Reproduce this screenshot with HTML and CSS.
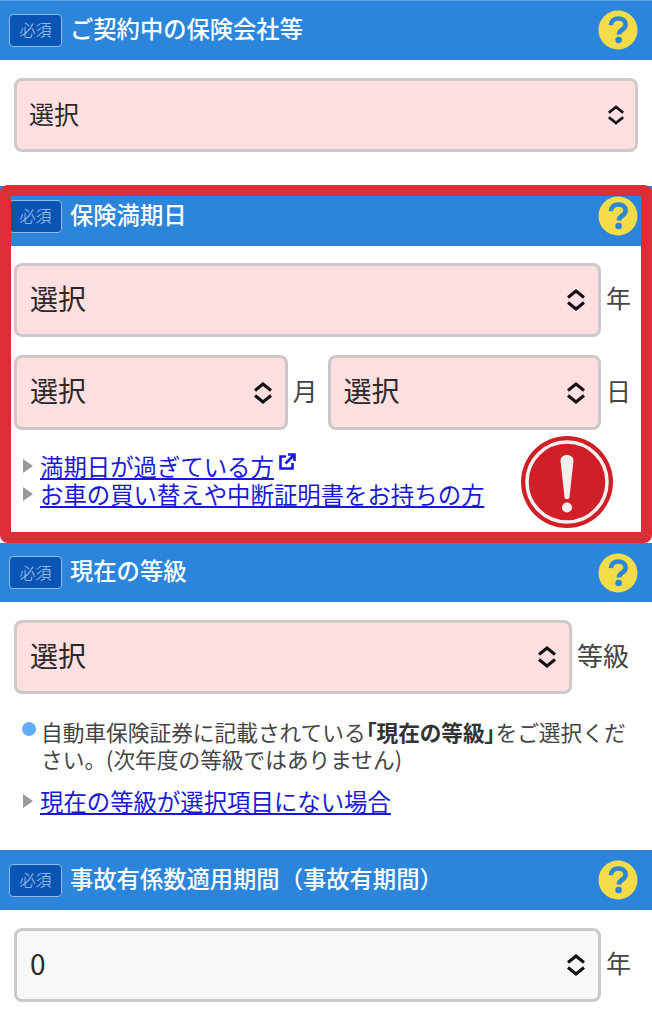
FILE: index.html
```html
<!DOCTYPE html>
<html lang="ja">
<head>
<meta charset="utf-8">
<title>保険満期日</title>
<link rel="stylesheet" href="styles.css">
</head>
<body>
<svg class="defs" width="0" height="0" aria-hidden="true">
  <symbol id="help" viewBox="0 0 40 40">
    <circle cx="20" cy="20" r="19.5" fill="#f3dc47"/>
    <path d="M12.8 15.2c.3-4.4 3.300-6.700 7.500-6.700 4.300 0 7.300 2.400 7.300 5.900 0 2.600-1.500 4-3.500 5.300-2 1.300-3.200 2.200-3.200 4.700" fill="none" stroke="#2b86db" stroke-width="4.600"/>
    <circle cx="20.600" cy="30" r="3.300" fill="#2b86db"/>
  </symbol>
  <symbol id="updown" viewBox="0 0 20 22">
    <path d="M2 8.500 10 2l8 6.500M2 13.500 10 20l8-6.500" fill="none" stroke="#111" stroke-width="3"/>
  </symbol>
</svg>

<section class="block block-first">
  <header class="head"><span class="badge">必須</span><h2 class="title">ご契約中の保険会社等</h2><svg class="help"><use href="#help"/></svg></header>
  <div class="body">
    <div class="row"><div class="select select-small"><span class="value">選択</span><svg class="arrows"><use href="#updown"/></svg></div></div>
  </div>
</section>

<section class="block block-alert">
  <header class="head"><span class="badge">必須</span><h2 class="title">保険満期日</h2><svg class="help"><use href="#help"/></svg></header>
  <div class="body body-alert">
    <div class="row"><div class="select"><span class="value">選択</span><svg class="arrows"><use href="#updown"/></svg></div><span class="unit">年</span></div>
    <div class="row row-split">
      <div class="select"><span class="value">選択</span><svg class="arrows"><use href="#updown"/></svg></div><span class="unit unit-mid">月</span>
      <div class="select"><span class="value">選択</span><svg class="arrows"><use href="#updown"/></svg></div><span class="unit">日</span>
    </div>
    <ul class="links">
      <li><a href="#">満期日が過ぎている方</a><svg class="ext" viewBox="0 0 18 18"><path d="M8 3.500H2.500v12h12V10M7.500 10.500 16 2M10 1.500h6.500V8" fill="none" stroke="#1a1ad6" stroke-width="2.600"/></svg></li>
      <li><a href="#">お車の買い替えや中断証明書をお持ちの方</a></li>
    </ul>
  </div>
  <svg class="alert" viewBox="0 0 92 92" aria-hidden="true">
    <circle cx="46" cy="46" r="46" fill="#d01f26"/>
    <circle cx="46" cy="46" r="40" fill="none" stroke="#f5f0f0" stroke-width="3.500"/>
    <path d="M39.500 25c-.3-8 13.300-8 13 0l-4 36c-.3 3-4.700 3-5 0z" fill="#f3efef"/>
    <circle cx="46" cy="71.500" r="5" fill="#f3efef"/>
  </svg>
</section>

<section class="block block-rank">
  <header class="head"><span class="badge">必須</span><h2 class="title">現在の等級</h2><svg class="help"><use href="#help"/></svg></header>
  <div class="body">
    <div class="row"><div class="select"><span class="value">選択</span><svg class="arrows"><use href="#updown"/></svg></div><span class="unit unit-wide">等級</span></div>
    <p class="note">自動車保険証券に記載されている<b class="strong">「現在の等級」</b>をご選択ください。(次年度の等級ではありません)</p>
    <ul class="links links-rank"><li><a href="#">現在の等級が選択項目にない場合</a></li></ul>
  </div>
</section>

<section class="block">
  <header class="head"><span class="badge">必須</span><h2 class="title">事故有係数適用期間（事故有期間）</h2><svg class="help"><use href="#help"/></svg></header>
  <div class="body">
    <div class="row"><div class="select select-plain"><span class="value">0</span><svg class="arrows"><use href="#updown"/></svg></div><span class="unit">年</span></div>
  </div>
</section>
</body>
</html>
```

FILE: styles.css
```css
* { box-sizing: border-box; }
html, body { margin: 0; padding: 0; }
body {
  width: 652px;
  height: 1024px;
  overflow: hidden;
  background: #fff;
  color: #222;
  font-family: "Noto Sans CJK JP", "Noto Sans", sans-serif;
}
.defs { position: absolute; }

.block-first { height: 186px; }
.block-alert { position: relative; height: 357px; }
.block-rank { height: 307px; }

/* Red highlight frame lies over the section and clips the badge edge */
.block-alert::after {
  content: "";
  position: absolute;
  inset: -1px 0 0 0;
  border: 11px solid #dd2e38;
  border-radius: 8px;
  pointer-events: none;
}

.head {
  height: 60px;
  display: flex;
  align-items: center;
  padding: 0 14px 0 9px;
  background: #2b86db;
}
.block-first .head { box-shadow: inset 0 1px 0 #58a4ea; }
.block-rank .head { height: 59px; }
.badge {
  flex: none;
  width: 53px;
  height: 33px;
  display: flex;
  align-items: center;
  justify-content: center;
  padding-bottom: 2px;
  background: #0a54b4;
  border: 1px solid #8dbdf0;
  border-radius: 4px;
  color: #a9cdf2;
  font-size: 16px;
  font-weight: 300;
}
.title {
  flex: 1;
  margin: 0 0 0 8px;
  padding-bottom: 3px;
  color: #fff;
  font-size: 23.300px;
  font-weight: 500;
  line-height: 1;
  white-space: nowrap;
}
.help { flex: none; width: 40px; height: 40px; }

.body { padding: 18px 14px 0; }
.body-alert { padding-top: 17px; }

.row { display: flex; align-items: center; }
.row-split { margin-top: 18px; }

.select {
  flex: 1;
  min-width: 0;
  height: 74px;
  display: flex;
  align-items: center;
  justify-content: space-between;
  padding: 0 12px 0 13px;
  background: #ffdfe0;
  border: 3px solid #cdc9c9;
  border-radius: 8px;
  font-size: 28px;
  color: #2a2a2a;
}
.value { margin-top: -5px; }
.select-small { font-size: 25px; padding: 0 10px 0 12px; }
.select-small .arrows { width: 18px; height: 20px; }
.select-plain { background: #f8f8f8; }
.row-split .select { height: 75px; }
.arrows { flex: none; width: 20px; height: 22px; }

.unit {
  flex: none;
  width: 37px;
  padding: 0 0 5px 5px;
  font-size: 25px;
  color: #444;
  line-height: 1;
}
.unit-mid { width: 40px; }
.unit-wide { width: 66px; font-size: 26px; }

.links {
  list-style: none;
  margin: 22px 0 0;
  padding: 0;
  font-size: 23.400px;
  line-height: 28px;
}
.links li { position: relative; padding-left: 26px; white-space: nowrap; }
.links li::before {
  content: "";
  position: absolute;
  left: 9px;
  top: 7px;
  border-left: 10px solid #9a9a9a;
  border-top: 7px solid transparent;
  border-bottom: 7px solid transparent;
}
.links a { color: #1a1ad6; text-decoration: underline; text-underline-offset: 2px; text-decoration-thickness: 1.500px; }
.ext { width: 18px; height: 18px; margin-left: 4px; vertical-align: 5px; }
.links-rank { margin-top: 15px; }

.note {
  position: relative;
  margin: 24px 0 0;
  padding-left: 27px;
  font-size: 21.700px;
  line-height: 27px;
  color: #444;
}
.strong { font-weight: 700; color: #333; font-feature-settings: "palt"; }
.note::before {
  content: "";
  position: absolute;
  left: 8px;
  top: 4px;
  width: 14px;
  height: 14px;
  border-radius: 50%;
  background: #63adf5;
}

.alert {
  position: absolute;
  left: 521px;
  top: 250px;
  width: 92px;
  height: 92px;
}
```
